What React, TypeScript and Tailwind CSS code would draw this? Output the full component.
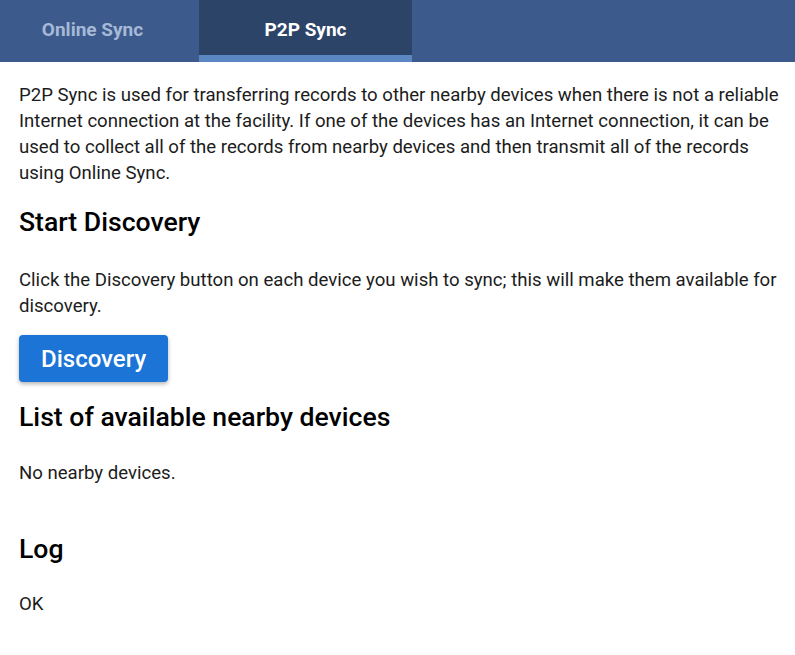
export default function App() {
  return (
    <div className="min-h-screen bg-white font-['Roboto',sans-serif] text-[#1c1c1c]">
      <div className="flex h-[62px] bg-[#3c5b8c]">
        <div className="flex w-[199px] items-center justify-center pr-[14px] pb-[2px] text-[19px] font-bold text-[#a7b9d6]">
          Online Sync
        </div>
        <div className="flex w-[213px] flex-col bg-[#2d4469]">
          <div className="flex flex-1 items-center justify-center pt-[5px] text-[19px] font-bold text-white">
            P2P Sync
          </div>
          <div className="h-[7px] bg-[#5b87c2]" />
        </div>
      </div>

      <div className="pl-[19px] pr-[10px] pt-[20px]">
        <p className="text-[18.6px] leading-[26px]">
          P2P Sync is used for transferring records to other nearby devices when there is not a reliable Internet
          connection at the facility. If one of the devices has an Internet connection, it can be used to collect all
          of the records from nearby devices and then transmit all of the records using Online Sync.
        </p>

        <h2 className="mt-[20px] text-[26.6px] font-medium leading-[32px] text-black">Start Discovery</h2>
        <p className="mt-[29px] text-[18.6px] leading-[26px]">
          Click the Discovery button on each device you wish to sync; this will make them available for discovery.
        </p>
        <button className="mt-[16px] h-[47px] rounded-[4px] bg-[#1b74d6] px-[22px] text-[24px] font-medium text-white shadow-[0_2px_4px_rgba(0,0,0,0.3)]">
          Discovery
        </button>

        <h2 className="mt-[19px] text-[26.6px] font-medium leading-[32px] text-black">List of available nearby devices</h2>
        <p className="mt-[27px] text-[18.6px] leading-[26px]">No nearby devices.</p>

        <h2 className="mt-[47px] text-[26.6px] font-medium leading-[32px] text-black">Log</h2>
        <p className="mt-[26px] text-[18.6px] leading-[26px]">OK</p>
      </div>
    </div>
  );
}
